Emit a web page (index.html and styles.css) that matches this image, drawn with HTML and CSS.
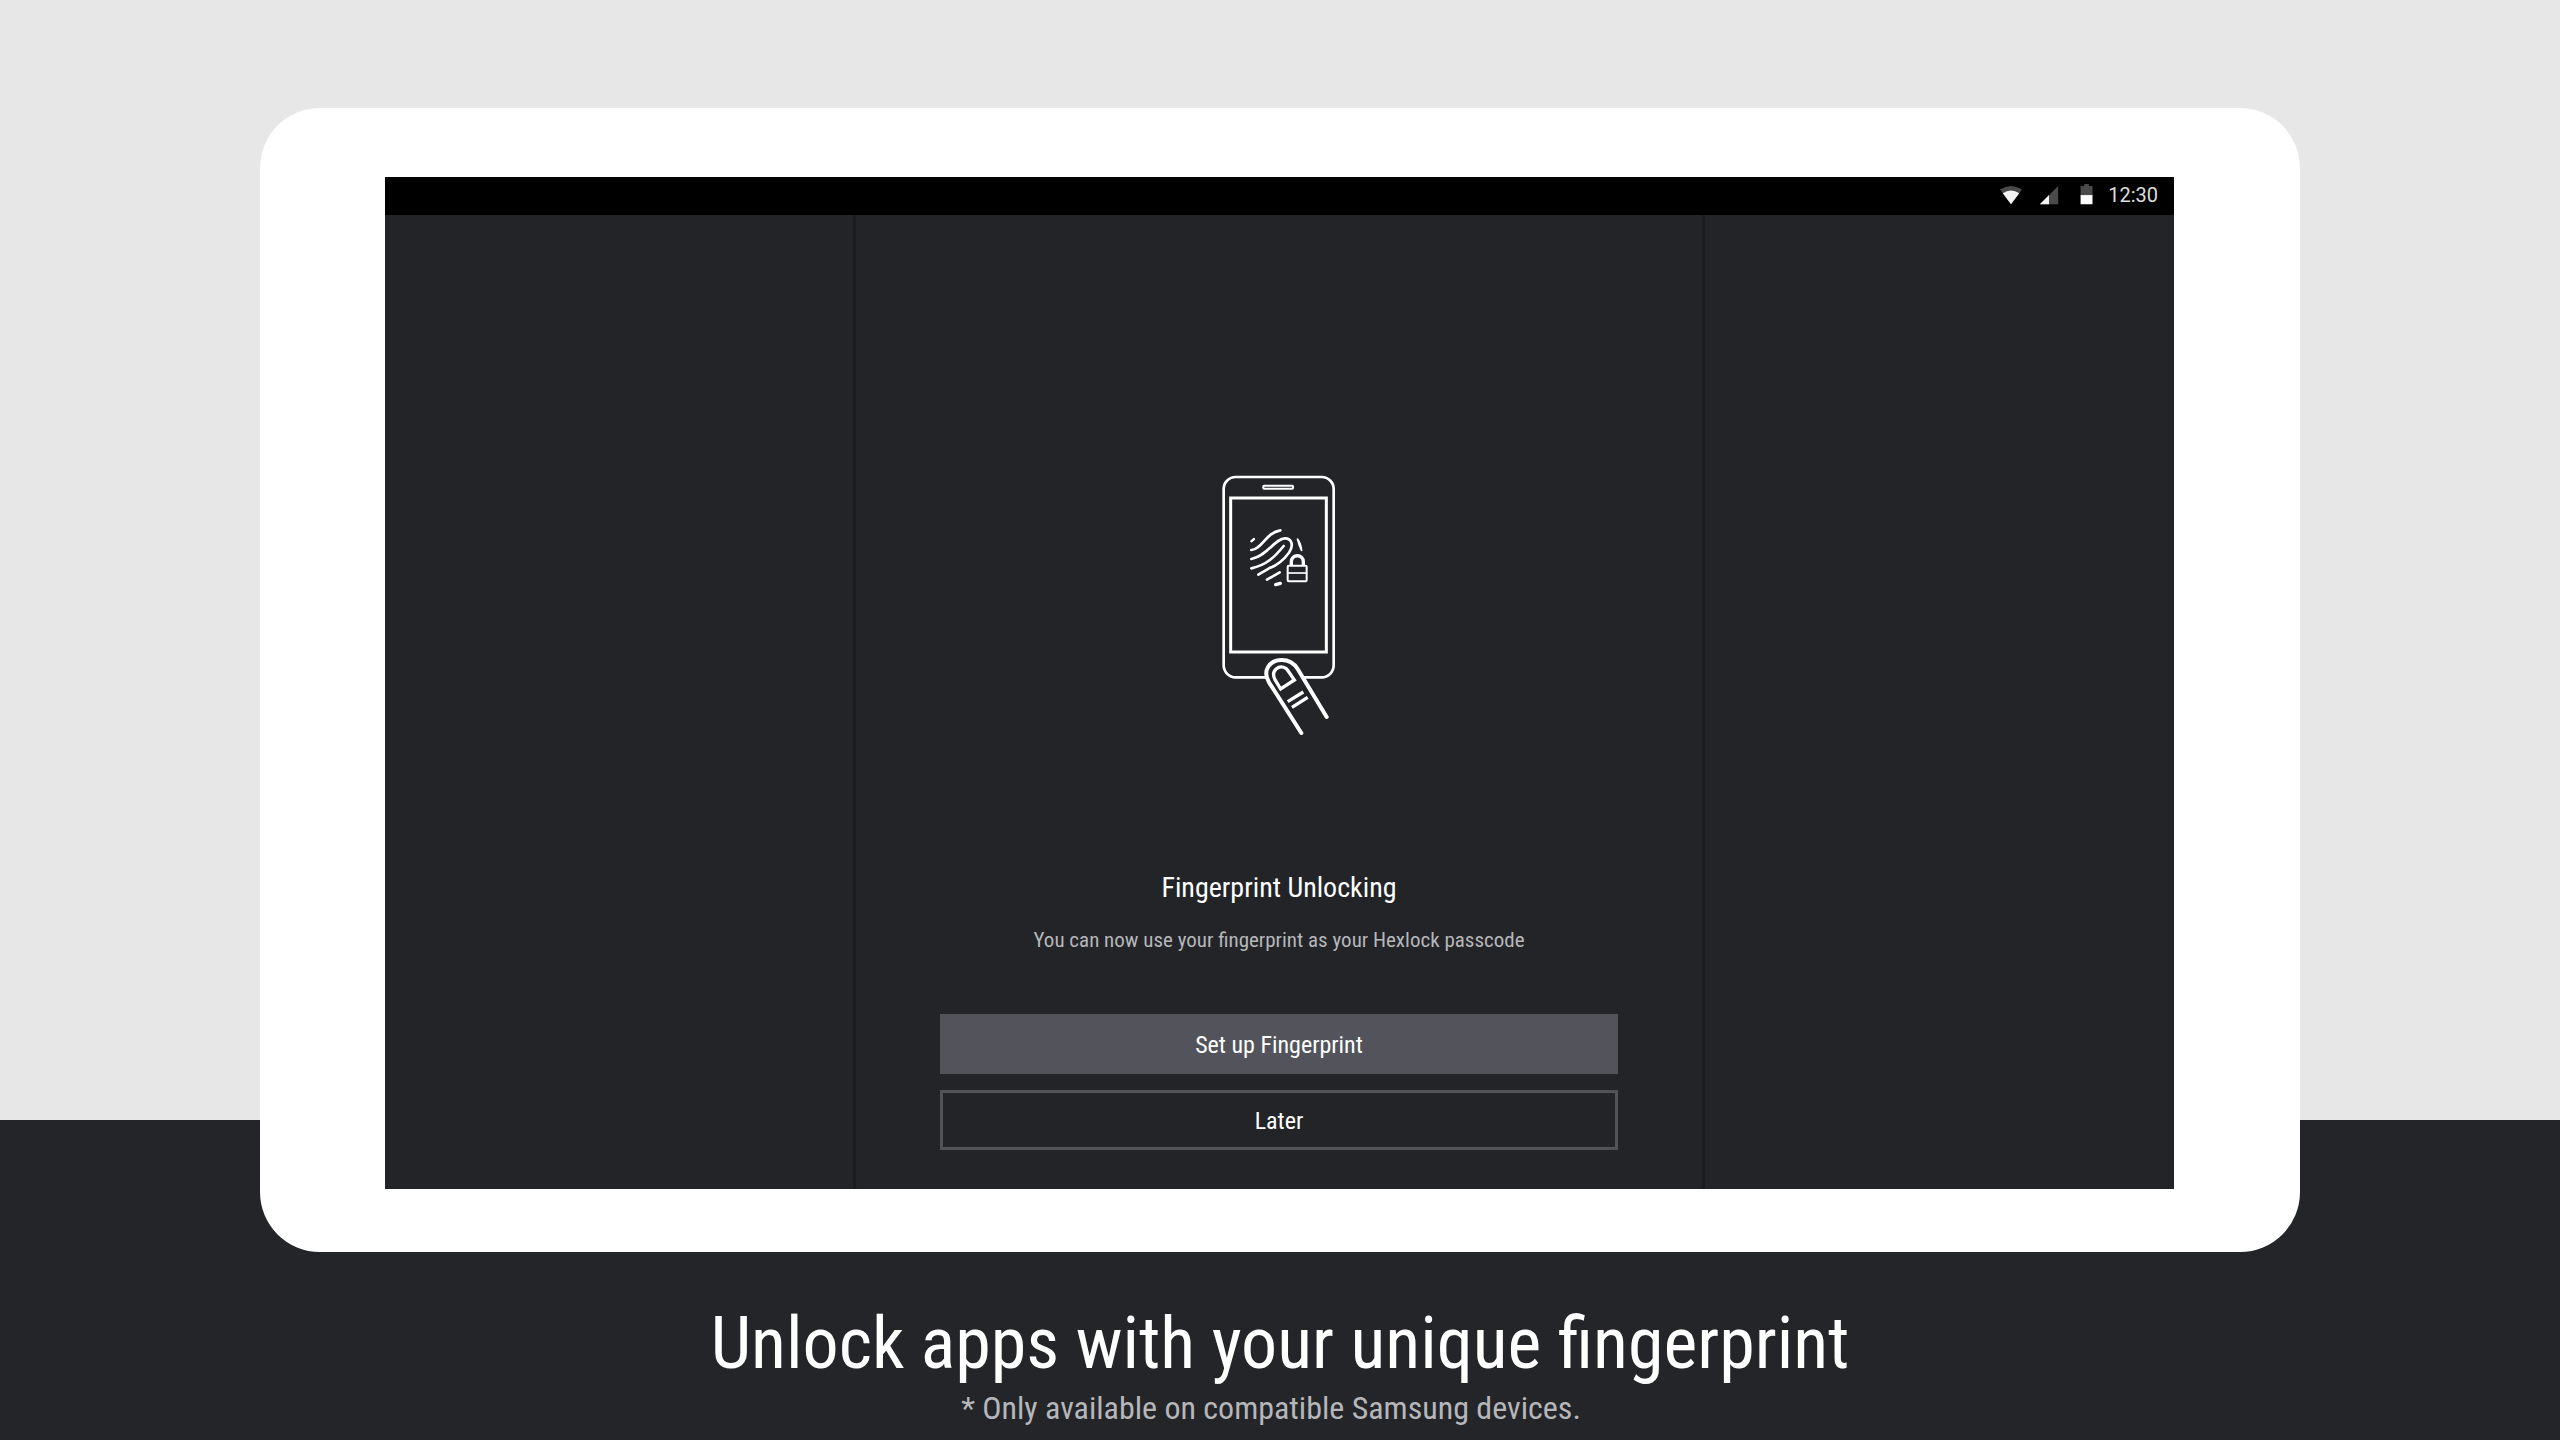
FILE: index.html
```html
<!DOCTYPE html>
<html lang="en">
<head>
    <meta charset="utf-8">
    <title>Hexlock - Fingerprint Unlocking</title>
    <link rel="stylesheet" href="styles.css">
</head>
<body>
    <main class="device">
        <div class="screen">
            <div class="status-bar">
                <svg class="status-icon" viewBox="0 0 24 24" aria-hidden="true">
                    <path fill="#4a4a4a" d="M0 5Q12-3 24 5L12 21Z"/>
                    <path fill="#f4f4f4" d="M3 9Q12 3 21 9L12 21Z"/>
                </svg>
                <svg class="status-icon" viewBox="0 0 24 24" aria-hidden="true">
                    <path fill="#4a4a4a" d="M22 1V21H2Z"/>
                    <path fill="#f4f4f4" d="M12 11V21H2Z"/>
                </svg>
                <svg class="status-icon" viewBox="0 0 24 24" aria-hidden="true">
                    <path fill="#4a4a4a" d="M5 1H9V-1H14V1H18V12H5Z"/>
                    <path fill="#fff" d="M5 11H18V21H5Z"/>
                </svg>
                <span class="clock">12:30</span>
            </div>

            <div class="content">
                <section class="panel">
                    <svg class="phone-icon" viewBox="118 100 360 795" fill="none" stroke="#fff" aria-hidden="true">
                        <rect x="132" y="112" width="330" height="601" rx="36" stroke-width="8"/>
                        <rect x="251" y="138" width="89" height="9" rx="2" stroke-width="6"/>
                        <rect x="153" y="175" width="287" height="462" stroke-width="9"/>

                        <!-- fingerprint -->
                        <g stroke-width="8" stroke-linecap="round">
                            <path d="M215 305L223 298" stroke-width="7"/>
                            <path d="M215 331C247 329 258 279 302 272"/>
                            <path d="M215 358C266 347 285 296 316 296C338 296 342 320 328 339C311 362 292 377 268 386L236 405"/>
                            <path d="M215 386C261 376 285 352 312 319"/>
                            <path d="M262 420L300 398"/>
                            <path d="M288 435L302 431" stroke-width="10"/>
                            <path fill="#fff" d="M353 297C360 306 365 319 366 334Q358 318 353 297Z" stroke-width="5"/>
                        </g>

                        <!-- padlock -->
                        <path d="M335 376V367C335 342 371 342 371 367V376" stroke-width="10"/>
                        <rect x="324" y="378" width="57" height="47" rx="3" stroke-width="6"/>
                        <path d="M324 400H381" stroke-width="5"/>

                        <!-- finger -->
                        <path d="M365 880L268 728C247 693 270 661 306 661C329 661 344 672 354 688L441 832V884Z" fill="#232428" stroke="none"/>
                        <path d="M365 880L268 728C247 693 270 661 306 661C329 661 344 672 354 688L441 832" stroke-width="12" stroke-linecap="round"/>
                        <path d="M303 748L286 720C272 692 298 673 320 687C326 692 330 702 344 721Z" stroke-width="10"/>
                        <path d="M324 786L371 757M337 803L384 773" stroke-width="10"/>
                    </svg>

                    <h2 class="title">Fingerprint Unlocking</h2>
                    <p class="description">You can now use your fingerprint as your Hexlock passcode</p>
                    <div class="actions">
                        <button type="button" class="btn btn-primary">Set up Fingerprint</button>
                        <button type="button" class="btn">Later</button>
                    </div>
                </section>
            </div>
        </div>
    </main>

    <footer class="caption">
        <h1>Unlock apps with your unique fingerprint</h1>
        <p>* Only available on compatible Samsung devices.</p>
    </footer>
</body>
</html>
```
FILE: styles.css
```css
* {
    box-sizing: border-box;
}
body {
    display: flex;
    flex-direction: column;
    align-items: center;
    min-height: 100vh;
    margin: 0;
    padding-top: 108px;
    font-family: "Roboto Condensed", "Liberation Sans Narrow", Roboto, sans-serif;
    color: #fff;
    background: linear-gradient(#e7e7e7 1120px, #242529 1120px);
}
h1, h2, p {
    margin: 0;
    font-weight: 400;
}
.device {
    width: 80%;
    max-width: 2040px;
    padding: 69px 126px 63px 125px;
    background-color: #fff;
    border-radius: 60px;
}
.screen {
    display: flex;
    flex-direction: column;
    background-color: #232428;
}
.status-bar {
    display: flex;
    align-items: center;
    justify-content: flex-end;
    height: 38px;
    padding-right: 16px;
    background-color: #000;
}
.status-icon {
    width: 22px;
    height: 22px;
    margin-right: 16px;
    overflow: visible;
}
.status-icon:nth-child(3) {
    margin-right: 10px;
}
.clock {
    font-family: Roboto, sans-serif;
    font-size: 20px;
    line-height: 36px;
    padding-bottom: 2px;
    color: #ddd;
}
.content {
    display: grid;
    grid-template-columns: 468fr 852fr 469fr;
}
.panel {
    grid-column: 2;
    display: flex;
    flex-direction: column;
    align-items: center;
    padding: 258px 84px 39px;
    border: solid #1b1c1f;
    border-width: 0 3px;
}
.phone-icon {
    width: 120px;
    height: 265px;
}
.title {
    margin-top: 130px;
    font-size: 28px;
    line-height: 40px;
}
.description {
    margin-top: 16px;
    font-size: 21px;
    line-height: 32px;
    color: #b6b7ba;
}
.actions {
    display: flex;
    flex-direction: column;
    gap: 16px;
    width: 100%;
    margin-top: 58px;
}
.btn {
    height: 60px;
    padding: 2px 0 0;
    border: 3px solid #525357;
    font-family: inherit;
    font-size: 24px;
    color: #fff;
    background-color: transparent;
    cursor: pointer;
}
.btn-primary {
    background-color: #53545b;
}
.caption {
    padding-top: 50px;
    text-align: center;
}
.caption h1 {
    font-size: 72px;
    line-height: 84px;
}
.caption p {
    padding-right: 18px;
    font-size: 32px;
    line-height: 44px;
    color: #b6b7ba;
}
```
